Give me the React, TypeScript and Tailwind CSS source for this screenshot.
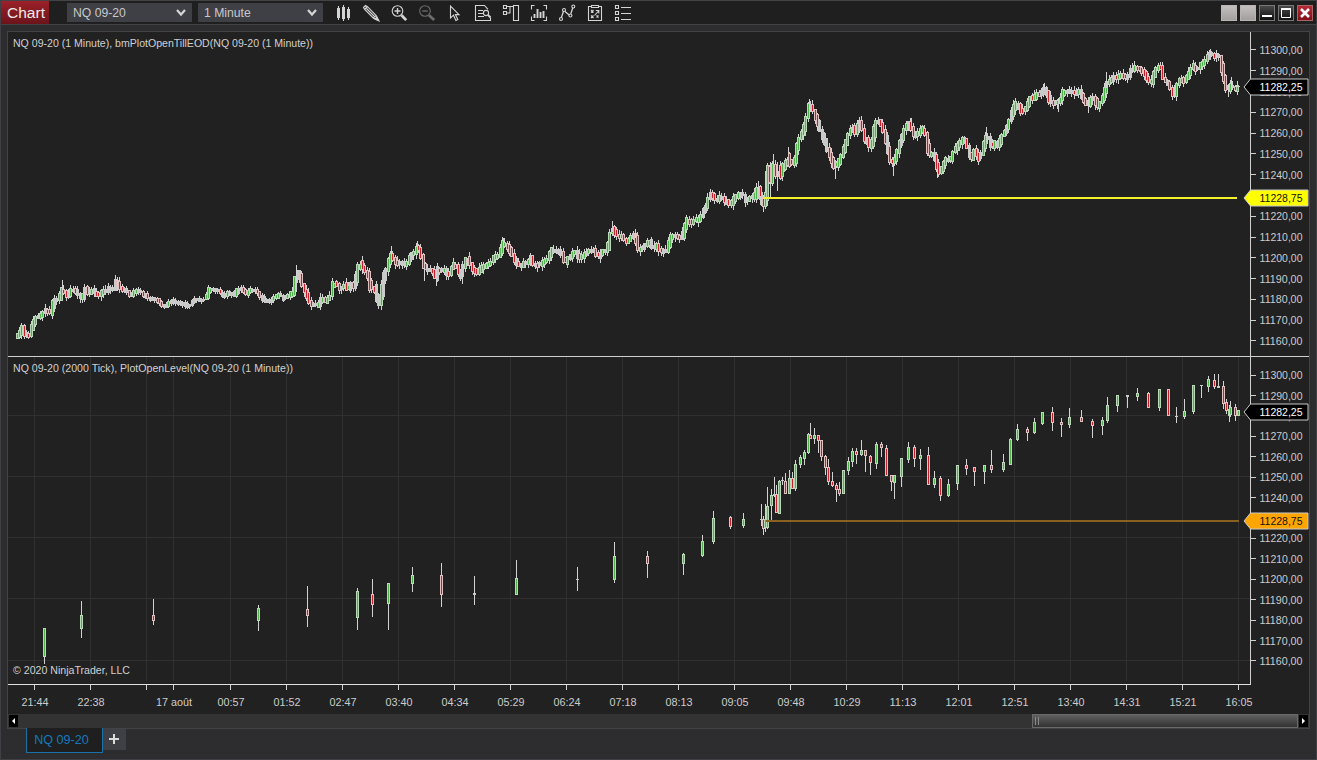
import React from "react";

type Pt = [number, number];
type Candle = [x: number, high: number, low: number, top: number, bottom: number, kind: "g" | "r" | "w"];

const LIGHT = "#d2d2d2";
const GREEN = "#50b04e";
const RED = "#c4202c";
const FONT = "'Liberation Sans', Arial, sans-serif";

/* Price path of the one minute series, in panel pixels */
const minutePath: Pt[] = [
  [17, 336], [20, 333], [22, 326], [24, 331], [26, 337], [28, 331], [30, 336], [32, 326], [34, 321], [36, 317], [40, 316],
  [43, 312], [45, 310], [48, 310], [50, 314], [52, 310], [54, 300], [57, 298], [59, 301], [61, 293], [63, 288], [65, 293],
  [68, 297], [71, 289], [74, 290], [77, 291], [80, 298], [83, 296], [86, 287], [89, 294], [92, 289], [95, 292], [98, 297],
  [101, 293], [104, 290], [107, 291], [110, 288], [114, 289], [116, 280], [119, 286], [122, 289], [127, 290], [131, 295],
  [136, 290], [141, 292], [146, 295], [151, 299], [156, 299], [161, 303], [165, 308], [170, 301], [175, 302], [182, 303],
  [190, 306], [194, 299], [203, 300], [207, 297], [209, 289], [218, 290], [225, 296], [228, 291], [234, 296], [238, 288],
  [242, 288], [246, 295], [250, 290], [256, 289], [260, 296], [265, 300], [270, 301], [275, 297], [280, 293], [284, 299],
  [289, 295], [294, 292], [296, 272], [298, 272], [301, 277], [303, 288], [306, 292], [309, 301], [312, 306], [315, 303],
  [318, 307], [322, 297], [325, 301], [330, 298], [333, 283], [337, 284], [340, 290], [344, 284], [348, 289], [352, 284],
  [354, 289], [357, 272], [360, 261], [363, 268], [368, 273], [371, 292], [374, 283], [377, 298], [380, 306], [382, 290],
  [384, 275], [387, 269], [391, 253], [394, 260], [398, 264], [401, 262], [404, 264], [408, 262], [411, 255], [414, 253],
  [417, 246], [420, 250], [423, 262], [425, 270], [428, 268], [431, 270], [434, 272], [436, 280], [438, 266], [441, 272],
  [445, 269], [449, 276], [452, 267], [455, 263], [458, 270], [462, 278], [464, 262], [467, 258], [470, 262], [473, 269],
  [477, 273], [481, 268], [484, 266], [488, 265], [492, 261], [496, 256], [500, 255], [503, 242], [506, 244], [510, 250],
  [514, 258], [518, 264], [521, 267], [525, 262], [529, 262], [531, 255], [534, 266], [540, 264], [546, 261], [549, 257],
  [552, 248], [556, 252], [561, 251], [565, 263], [570, 256], [575, 252], [580, 258], [585, 254], [590, 250], [594, 249],
  [598, 257], [602, 252], [605, 250], [607, 251], [609, 240], [612, 226], [615, 233], [619, 237], [623, 236], [627, 243],
  [630, 238], [635, 234], [638, 250], [641, 249], [645, 245], [650, 241], [654, 249], [657, 245], [661, 251], [667, 250],
  [671, 236], [676, 236], [682, 239], [684, 230], [687, 219], [691, 223], [695, 220], [700, 219], [704, 210], [707, 205],
  [709, 195], [711, 193], [715, 198], [718, 200], [721, 197], [725, 200], [728, 203], [732, 203], [735, 197], [739, 194],
  [744, 195], [746, 201], [750, 197], [754, 198], [758, 188], [760, 196], [763, 204], [765, 200], [767, 170], [769, 178],
  [772, 165], [775, 175], [778, 172], [781, 175], [784, 163], [787, 165], [789, 160], [792, 162], [795, 162], [797, 145],
  [800, 137], [803, 132], [806, 120], [809, 104], [811, 105], [814, 112], [817, 120], [820, 128], [823, 135], [826, 145],
  [829, 152], [832, 160], [835, 167], [838, 163], [841, 157], [844, 150], [847, 138], [850, 131], [853, 127], [856, 133],
  [860, 120], [862, 125], [864, 142], [867, 138], [870, 148], [873, 140], [875, 123], [878, 121], [882, 125], [885, 134],
  [888, 150], [890, 160], [893, 162], [896, 158], [899, 145], [902, 136], [905, 128], [909, 121], [912, 130], [915, 136],
  [918, 134], [921, 130], [924, 127], [926, 135], [929, 155], [932, 152], [935, 155], [937, 165], [939, 173], [942, 169],
  [945, 161], [948, 158], [951, 160], [954, 150], [958, 146], [963, 138], [966, 142], [970, 155], [972, 160], [975, 148],
  [977, 154], [980, 160], [983, 148], [986, 136], [989, 138], [992, 147], [995, 142], [998, 146], [1002, 136], [1006, 130],
  [1009, 122], [1012, 112], [1016, 103], [1019, 106], [1022, 113], [1027, 107], [1030, 97], [1034, 99], [1038, 92],
  [1041, 94], [1044, 88], [1047, 92], [1050, 101], [1054, 103], [1058, 102], [1061, 99], [1064, 90], [1067, 92],
  [1070, 90], [1074, 93], [1077, 92], [1080, 91], [1084, 100], [1088, 106], [1091, 98], [1095, 99], [1098, 108],
  [1101, 101], [1104, 95], [1107, 82], [1111, 80], [1115, 77], [1118, 78], [1121, 73], [1125, 78], [1128, 76], [1131, 70],
  [1136, 67], [1140, 68], [1144, 72], [1148, 80], [1152, 83], [1155, 70], [1158, 66], [1161, 66], [1164, 80], [1168, 83],
  [1171, 90], [1174, 95], [1178, 82], [1182, 78], [1185, 82], [1188, 76], [1191, 68], [1194, 65], [1197, 70], [1200, 65],
  [1204, 62], [1208, 56], [1212, 53], [1216, 57], [1219, 54], [1221, 60], [1223, 74], [1226, 87], [1229, 90], [1232, 84],
  [1235, 90], [1238, 87],
];

/* Notable extremes of the one minute series: x, high, low */
const spikes: [number, number, number][] = [
  [62, 280, 294], [117, 278, 288], [296, 265, 292], [391, 246, 264], [417, 241, 250], [424, 262, 281], [436, 272, 286],
  [462, 272, 284], [503, 238, 246], [612, 221, 232], [635, 229, 238], [758, 181, 190], [763, 198, 212], [770, 165, 198],
  [777, 162, 191], [773, 154, 168], [788, 147, 165], [809, 99, 110], [835, 160, 179], [893, 158, 176], [911, 118, 125],
  [937, 160, 178], [986, 127, 138], [1044, 83, 90], [1058, 98, 112], [1088, 100, 113], [1106, 72, 88], [1132, 63, 72],
  [1174, 90, 98], [1210, 49, 56], [1216, 50, 62], [1228, 85, 97], [1231, 77, 92],
];

/* Large bars right after the session open */
const openingBars: Candle[] = [
  [760, 185, 199, 186, 197, "r"], [763, 196, 212, 197, 207, "r"], [765, 190, 209, 192, 207, "g"], [767, 163, 206, 165, 201, "g"],
  [769, 165, 184, 166, 183, "r"], [772, 161, 186, 163, 184, "g"], [775, 160, 179, 164, 177, "r"], [780, 161, 180, 165, 179, "r"],
  [785, 158, 171, 160, 170, "g"], [789, 152, 168, 153, 167, "r"], [794, 155, 168, 157, 166, "g"],
];

const tickCandles: Candle[] = [
  [44, 628, 664, 628, 657, "g"], [81, 601, 638, 615, 629, "g"], [153, 599, 625, 615, 621, "r"], [258, 605, 631, 608, 621, "g"],
  [307, 586, 627, 609, 616, "r"], [357, 588, 630, 591, 618, "g"], [372, 579, 617, 594, 605, "r"], [388, 583, 630, 583, 604, "g"],
  [412, 567, 592, 575, 584, "g"], [441, 563, 607, 575, 595, "r"], [474, 576, 605, 593, 595, "w"], [516, 560, 595, 578, 595, "g"],
  [577, 567, 591, 579, 580, "w"], [614, 542, 583, 556, 580, "g"], [647, 551, 578, 556, 564, "r"], [683, 553, 575, 554, 564, "g"],
  [702, 535, 557, 541, 556, "g"], [713, 511, 544, 518, 542, "g"], [730, 516, 529, 517, 527, "r"], [743, 513, 528, 519, 526, "g"],
  [761, 504, 526, 519, 520, "w"], [763, 516, 535, 519, 529, "r"], [765, 504, 532, 519, 528, "g"], [767, 487, 529, 506, 528, "g"],
  [771, 489, 522, 495, 506, "g"], [774, 477, 497, 494, 496, "w"], [776, 485, 513, 494, 513, "r"], [779, 480, 514, 481, 514, "g"],
  [782, 477, 485, 480, 481, "w"], [785, 473, 494, 481, 494, "r"], [789, 470, 494, 478, 494, "g"], [792, 472, 489, 478, 489, "r"],
  [795, 460, 491, 464, 489, "g"], [800, 455, 468, 457, 465, "g"], [804, 450, 465, 452, 459, "g"], [808, 433, 454, 434, 453, "g"],
  [810, 423, 439, 435, 439, "r"], [814, 428, 444, 435, 439, "g"], [818, 435, 453, 435, 441, "r"], [821, 440, 461, 440, 457, "r"],
  [825, 455, 475, 456, 468, "r"], [828, 459, 485, 467, 482, "r"], [832, 472, 487, 481, 486, "r"], [836, 483, 502, 485, 490, "r"],
  [839, 482, 496, 489, 494, "r"], [843, 470, 494, 470, 494, "g"], [848, 457, 475, 461, 471, "g"], [852, 448, 467, 451, 462, "g"],
  [856, 448, 464, 451, 455, "r"], [861, 440, 456, 450, 455, "g"], [865, 450, 472, 450, 456, "r"], [870, 455, 475, 456, 463, "r"],
  [876, 442, 469, 444, 464, "g"], [881, 442, 457, 444, 448, "r"], [886, 445, 476, 448, 476, "r"], [891, 475, 491, 475, 482, "r"],
  [894, 475, 499, 475, 483, "g"], [901, 458, 487, 458, 477, "g"], [908, 442, 463, 447, 460, "g"], [914, 445, 467, 447, 459, "r"],
  [920, 449, 470, 455, 459, "g"], [928, 447, 485, 455, 485, "r"], [934, 471, 488, 478, 485, "g"], [940, 476, 501, 478, 496, "r"],
  [948, 479, 497, 484, 496, "g"], [957, 465, 490, 465, 484, "g"], [966, 459, 475, 465, 469, "r"], [974, 467, 486, 467, 472, "r"],
  [984, 465, 484, 465, 472, "g"], [991, 450, 473, 465, 470, "r"], [1003, 454, 472, 462, 470, "g"], [1010, 438, 465, 439, 465, "g"],
  [1017, 424, 441, 429, 440, "g"], [1027, 427, 441, 429, 433, "r"], [1034, 418, 434, 422, 433, "g"], [1042, 412, 425, 412, 424, "g"],
  [1052, 407, 431, 412, 423, "r"], [1061, 418, 437, 422, 425, "r"], [1069, 408, 428, 417, 425, "g"], [1081, 410, 422, 417, 422, "r"],
  [1092, 419, 438, 421, 426, "r"], [1102, 417, 435, 420, 426, "g"], [1107, 397, 423, 405, 421, "g"], [1117, 395, 412, 395, 406, "g"],
  [1127, 395, 408, 395, 397, "w"], [1137, 388, 401, 393, 397, "g"], [1148, 392, 408, 393, 408, "r"], [1159, 389, 411, 389, 408, "g"],
  [1168, 389, 416, 389, 416, "r"], [1176, 407, 423, 416, 417, "w"], [1184, 399, 419, 411, 417, "g"], [1193, 385, 414, 385, 412, "g"],
  [1201, 385, 398, 385, 386, "w"], [1208, 376, 392, 379, 387, "g"], [1214, 374, 389, 380, 387, "r"], [1218, 374, 388, 386, 388, "w"],
  [1223, 381, 409, 386, 404, "r"], [1226, 399, 414, 402, 411, "r"], [1229, 405, 422, 409, 416, "g"], [1230, 401, 417, 407, 415, "g"],
  [1235, 404, 421, 407, 416, "r"], [1238, 410, 416, 410, 416, "g"],
];

function noise(n: number) {
  const v = Math.sin(n * 127.1 + 11.7) * 43758.5453;
  return v - Math.floor(v);
}

function priceAt(x: number) {
  for (let i = 1; i < minutePath.length; i++) {
    const [x1, y1] = minutePath[i];
    if (x <= x1) {
      const [x0, y0] = minutePath[i - 1];
      return y0 + ((y1 - y0) * Math.max(0, x - x0)) / (x1 - x0);
    }
  }
  return minutePath[minutePath.length - 1][1];
}

function buildMinuteCandles(): Candle[] {
  const out: Candle[] = [];
  let x = 17;
  let i = 0;
  while (x <= 1237) {
    const open = priceAt(x - 1.5) + (noise(i) - 0.5) * 2;
    const close = priceAt(x + 1.5) + (noise(i + 500) - 0.5) * 2;
    const quiet = x > 120 && x < 290 ? 0.6 : 1;
    const top = Math.round(Math.min(open, close) - 1.2 * quiet - 0.3);
    const bottom = Math.round(Math.max(open, close) + 1.2 * quiet + 1);
    const high = Math.round(top - noise(i + 900) * 4 * quiet);
    const low = Math.round(bottom + noise(i + 1300) * 4 * quiet);
    const plain = bottom - top < 5 || noise(i + 2100) > 0.8;
    out.push([x, high, low, top, bottom, plain ? "w" : close < open ? "g" : "r"]);
    x += i % 3 === 2 ? 3 : 2;
    i++;
  }
  return out;
}

const minuteCandles = buildMinuteCandles();

function CandleShape({ c }: { c: Candle }) {
  const [x, high, low, top, bottom, kind] = c;
  return (
    <g>
      <rect x={x} y={high} width={1} height={Math.max(1, low - high)} fill={LIGHT} />
      <rect x={x - 1} y={top} width={3} height={Math.max(1, bottom - top)} fill={kind === "g" ? "#b9dab7" : kind === "r" ? "#e3c0c0" : "#cacaca"} />
      {kind !== "w" && bottom - top > 2 && (
        <rect x={x} y={top + 1} width={1} height={bottom - top - 2} fill={kind === "g" ? GREEN : RED} />
      )}
    </g>
  );
}

const timeTicks: [number, string, number][] = [
  [34, "21:44", 35], [90, "22:38", 91], [146, "", 0], [173, "17 août", 174], [230, "00:57", 231], [286, "01:52", 287], [342, "02:47", 343],
  [398, "03:40", 399], [454, "04:34", 455], [510, "05:29", 511], [566, "06:24", 567], [622, "07:18", 623], [678, "08:13", 679],
  [734, "09:05", 735], [790, "09:48", 791], [846, "10:29", 847], [902, "11:13", 903], [958, "12:01", 959], [1014, "12:51", 1015],
  [1070, "13:40", 1071], [1126, "14:31", 1127], [1182, "15:21", 1183], [1238, "16:05", 1239],
];

function PriceScale({ start, step, skip }: { start: number; step: number; skip: number }) {
  return (
    <g>
      {Array.from({ length: 15 }, (_, k) => {
        if (k === skip) return null;
        const tickY = Math.round(start + k * step - 0.6);
        const textY = Math.round(start + k * step) + 4;
        return (
          <g key={k}>
            <rect x={1251} y={tickY} width={5} height={1} fill="#cfcfcf" />
            <text x={1259.5} y={textY} fontSize={11} textLength={43} lengthAdjust="spacingAndGlyphs" fill="#cccccc">
              {`${11300 - k * 10},00`}
            </text>
          </g>
        );
      })}
    </g>
  );
}

function PriceTag({ y, fill, color, value }: { y: number; fill: string; color: string; value: string }) {
  return (
    <g>
      <path d={`M1244 ${y} L1250.5 ${y - 8} H1308 V${y + 8} H1250.5 Z`} fill={fill} stroke="#c9c9c9" strokeWidth={1} />
      <text x={1259.5} y={y + 4} fontSize={11} textLength={43} lengthAdjust="spacingAndGlyphs" fill={color}>
        {value}
      </text>
    </g>
  );
}

function MinuteChart() {
  return (
    <svg width={1301} height={325} viewBox="8 32 1301 325" fontFamily={FONT} className="block shrink-0">
      <text x={13} y={47} fontSize={11} textLength={300} lengthAdjust="spacingAndGlyphs" fill="#d0d0d0">
        NQ 09-20 (1 Minute), bmPlotOpenTillEOD(NQ 09-20 (1 Minute))
      </text>
      <g shapeRendering="crispEdges">
        {minuteCandles.map((c, i) => <CandleShape key={i} c={c} />)}
        {spikes.map(([x, h, l]) => <rect key={x} x={x} y={h} width={1} height={l - h} fill={LIGHT} />)}
        {openingBars.map((c) => <CandleShape key={c[0]} c={c} />)}
        <rect x={1235} y={86} width={5} height={1} fill={LIGHT} />
        <rect x={763} y={197} width={474} height={2} fill="#f4f02a" />
        <rect x={1250} y={32} width={1} height={325} fill="#cfcfcf" />
        <rect x={8} y={356} width={1301} height={1} fill="#cfcfcf" />
      </g>
      <PriceScale start={50} step={20.79} skip={7} />
      <PriceTag y={87} fill="#000" color="#fff" value="11282,25" />
      <PriceTag y={198} fill="#ffff00" color="#111" value="11228,75" />
    </svg>
  );
}

function TickChart() {
  return (
    <svg width={1301} height={357} viewBox="8 357 1301 357" fontFamily={FONT} className="block shrink-0">
      <g shapeRendering="crispEdges">
        {timeTicks.map(([x]) => <rect key={x} x={x} y={357} width={1} height={324} fill="#303030" />)}
        {[415, 476, 537, 598, 660].map((y) => <rect key={y} x={8} y={y} width={1242} height={1} fill="#303030" />)}
        {tickCandles.map((c, i) => <CandleShape key={i} c={c} />)}
        <rect x={766} y={520} width={473} height={2} fill="#89601f" />
        <rect x={1250} y={357} width={1} height={328} fill="#cfcfcf" />
        <rect x={8} y={684} width={1243} height={1} fill="#e0e0e0" />
        {timeTicks.map(([x]) => <rect key={x} x={x} y={685} width={1} height={5} fill="#cfcfcf" />)}
      </g>
      <text x={13} y={372} fontSize={11} textLength={280} lengthAdjust="spacingAndGlyphs" fill="#d0d0d0">
        NQ 09-20 (2000 Tick), PlotOpenLevel(NQ 09-20 (1 Minute))
      </text>
      <text x={13} y={674} fontSize={11} textLength={117} lengthAdjust="spacingAndGlyphs" fill="#d0d0d0">
        © 2020 NinjaTrader, LLC
      </text>
      {timeTicks.map(([x, label, cx]) =>
        label ? (
          <text key={x} x={cx} y={706} fontSize={11} textAnchor="middle" textLength={label.length > 5 ? 36 : 27} lengthAdjust="spacingAndGlyphs" fill="#cccccc">
            {label}
          </text>
        ) : null
      )}
      <PriceScale start={375.1} step={20.42} skip={7} />
      <PriceTag y={412} fill="#000" color="#fff" value="11282,25" />
      <PriceTag y={521} fill="#ffa500" color="#111" value="11228,75" />
    </svg>
  );
}

function Tool({ children, dim = false }: { children: React.ReactNode; dim?: boolean }) {
  return (
    <svg width={28} height={23} viewBox="0 1 28 23" fill="none" stroke={dim ? "#6c6c6c" : "#d4d4d4"} strokeWidth={1.1} className="block shrink-0">
      {children}
    </svg>
  );
}

function Tools() {
  return (
    <div className="flex">
      <Tool>
        <path d="M9.5 6v14M14.5 5v16M19.5 7v13" />
        <path d="M8 8h3v10H8zM13 7h3v12h-3zM18 9h3v9h-3z" fill="#d4d4d4" stroke="none" />
      </Tool>
      <Tool>
        <path d="M6.5 7.5l2-2 2 1.2 8.7 8.8 2.3 5-5-2.3-8.8-8.7zM8 9l2.5-2.5M9.5 8.5l8.5 8.5M16.3 18l3-2.7" />
        <path d="M18 19l1.8-1.8 2 3.6z" fill="#d4d4d4" />
      </Tool>
      <Tool>
        <circle cx={12.5} cy={11} r={5.3} />
        <path d="M12.5 8v6M9.5 11h6" strokeWidth={1.4} />
        <path d="M16.5 15.2l4.7 4.9" strokeWidth={2.8} />
      </Tool>
      <Tool dim>
        <circle cx={12} cy={11} r={5.3} />
        <path d="M9.2 11h5.6" strokeWidth={1.4} />
        <path d="M16 15.2l5.2 4.9" strokeWidth={2.8} />
      </Tool>
      <Tool>
        <path d="M9.5 6v12l3-2.8 2.4 5.2 1.9-.9-2.4-4.9h3.6z" />
      </Tool>
      <Tool>
        <path d="M21.5 17.5v3h-15v-15h9l3.5 3.8M9 10.5h5M9 13.5h5M9 16.5h6" />
        <circle cx={17} cy={13} r={2.6} />
        <path d="M18.9 14.9l2.6 2.6" strokeWidth={2} />
      </Tool>
      <Tool>
        <path d="M6.5 5.5h3v3h-3zM6.5 11.5h3v3h-3zM16.5 5.5h5v15h-5zM9.5 6.5h7M9.5 13h3.5V7" />
      </Tool>
      <Tool>
        <path d="M9.5 5.5h-3v4M6.5 16.5v4h3M18.5 5.5h3v4M21.5 16.5v4h-3" />
        <path d="M9.5 18v-4M12.5 18V9M15.5 18v-6M18.5 18v-7" strokeWidth={1.9} />
      </Tool>
      <Tool>
        <path d="M8.4 17.5l2.2-6.5M12 11.5l4.2 3.5M17.8 13.8l2-6" strokeWidth={1.3} />
        <circle cx={8} cy={19} r={1.5} />
        <circle cx={11} cy={10} r={1.5} />
        <circle cx={17.4} cy={15.5} r={1.5} />
        <circle cx={20.3} cy={6.5} r={1.5} />
      </Tool>
      <Tool>
        <path d="M10.5 6.5h-3v14h13v-14h-3M10.5 5.5h7v2h-7z" />
        <path d="M10 10l2.5 2.5M12.5 10L10 12.5M10 15.5l2.5 2.5M12.5 15.5L10 18M13.5 15.5l4-4.5M14.8 10.5h3v3M15.5 15.5l2 2M17.5 15.5l-2 2" />
      </Tool>
      <Tool>
        <path d="M6.5 5.5h3v3h-3zM6.5 11.5h3v3h-3zM6.5 17.5h3v3h-3zM12 7.5h10M12 13.5h10M12 19.5h10" />
      </Tool>
    </div>
  );
}

function Picker({ label }: { label: string }) {
  return (
    <div className="flex h-[19px] w-[125px] items-center justify-between bg-[#3f3f46] pr-[6px] pl-[6px] text-[12.2px] text-[#c8c8c8]">
      <span className="pt-[2px]">{label}</span>
      <svg width={10} height={8} viewBox="0 0 10 8" fill="none" stroke="#d4d4d4" strokeWidth={2.2}>
        <path d="M1 1l4 4.5L9 1" />
      </svg>
    </div>
  );
}

function WindowButtons() {
  return (
    <div className="flex gap-[3px] pt-[5px] pr-[3px]">
      <div className="h-4 w-4 border border-[#b8b4b4] bg-linear-to-b from-[#c3bfbf] to-[#a39f9f]" />
      <div className="h-4 w-4 border border-[#b8b4b4] bg-linear-to-b from-[#c3bfbf] to-[#a39f9f]" />
      <svg width={16} height={16} className="border border-[#777] bg-linear-to-b from-[#4a4a4a] to-[#111]">
        <path d="M2 10h10" stroke="#fff" strokeWidth={2} />
      </svg>
      <svg width={16} height={16} className="border border-[#777] bg-linear-to-b from-[#4a4a4a] to-[#111]">
        <path d="M2.5 3v8.5h9V3" stroke="#fff" fill="none" />
        <path d="M2 3h10" stroke="#fff" strokeWidth={2} />
      </svg>
      <svg width={16} height={16} className="border border-[#a66] bg-linear-to-b from-[#b52b36] to-[#80101a]">
        <path d="M3 3l8 8M11 3l-8 8" stroke="#fff" strokeWidth={2.6} />
      </svg>
    </div>
  );
}

export default function App() {
  return (
    <div className="flex h-[760px] w-[1317px] flex-col overflow-hidden border-r border-b border-l border-[#3f3f46] bg-[#2d2d30] font-['Liberation_Sans',Arial,sans-serif]">
      <header className="flex h-[25px] shrink-0 items-start justify-between border-t border-b border-[#434346] bg-[#1f1f1f]">
        <div className="flex">
          <div className="flex h-[23px] w-12 items-center justify-center bg-linear-to-b from-[#9c2029] to-[#6c141b] pl-[2px] text-[15.5px] text-[#f0e8e8]">
            Chart
          </div>
          <div className="ml-[18px] flex gap-[6px] pt-[2px]">
            <Picker label="NQ 09-20" />
            <Picker label="1 Minute" />
          </div>
          <div className="ml-[6px]">
            <Tools />
          </div>
        </div>
        <div className="-mt-px">
          <WindowButtons />
        </div>
      </header>

      <main className="mt-[6px] ml-[6px] flex h-[698px] w-[1303px] shrink-0 flex-col border border-[#434346] bg-[#212121]">
        <MinuteChart />
        <TickChart />
        <div className="flex h-[14px] shrink-0 items-center bg-[#333333] px-px">
          <svg width={9} height={12} className="shrink-0 bg-black">
            <path d="M6 3v6L3 6z" fill="#fff" />
          </svg>
          <div className="flex-1" />
          <div className="flex h-[14px] w-[266px] items-center gap-[2px] border border-[#6a6a6a] bg-linear-to-b from-[#606060] to-[#333333] pl-[2px]">
            <div className="h-2 w-px bg-[#888]" />
            <div className="h-2 w-px bg-[#888]" />
          </div>
          <svg width={9} height={12} className="ml-px shrink-0 bg-black">
            <path d="M3 3v6l3-3z" fill="#fff" />
          </svg>
        </div>
      </main>

      <footer className="ml-[25px] flex items-start">
        <div className="-mt-px flex h-[25px] w-[77px] items-center justify-center border border-t-0 border-[#1b71a8] bg-[#1f1f1f] pr-[6px] text-[12.6px] text-[#1479bd]">
          NQ 09-20
        </div>
        <div className="flex h-[21px] w-[23px] items-center justify-center bg-[#3f3f46]">
          <svg width={11} height={11}>
            <path d="M5 0v10M0 5h10" stroke="#dcdcdc" strokeWidth={2} />
          </svg>
        </div>
      </footer>
    </div>
  );
}
